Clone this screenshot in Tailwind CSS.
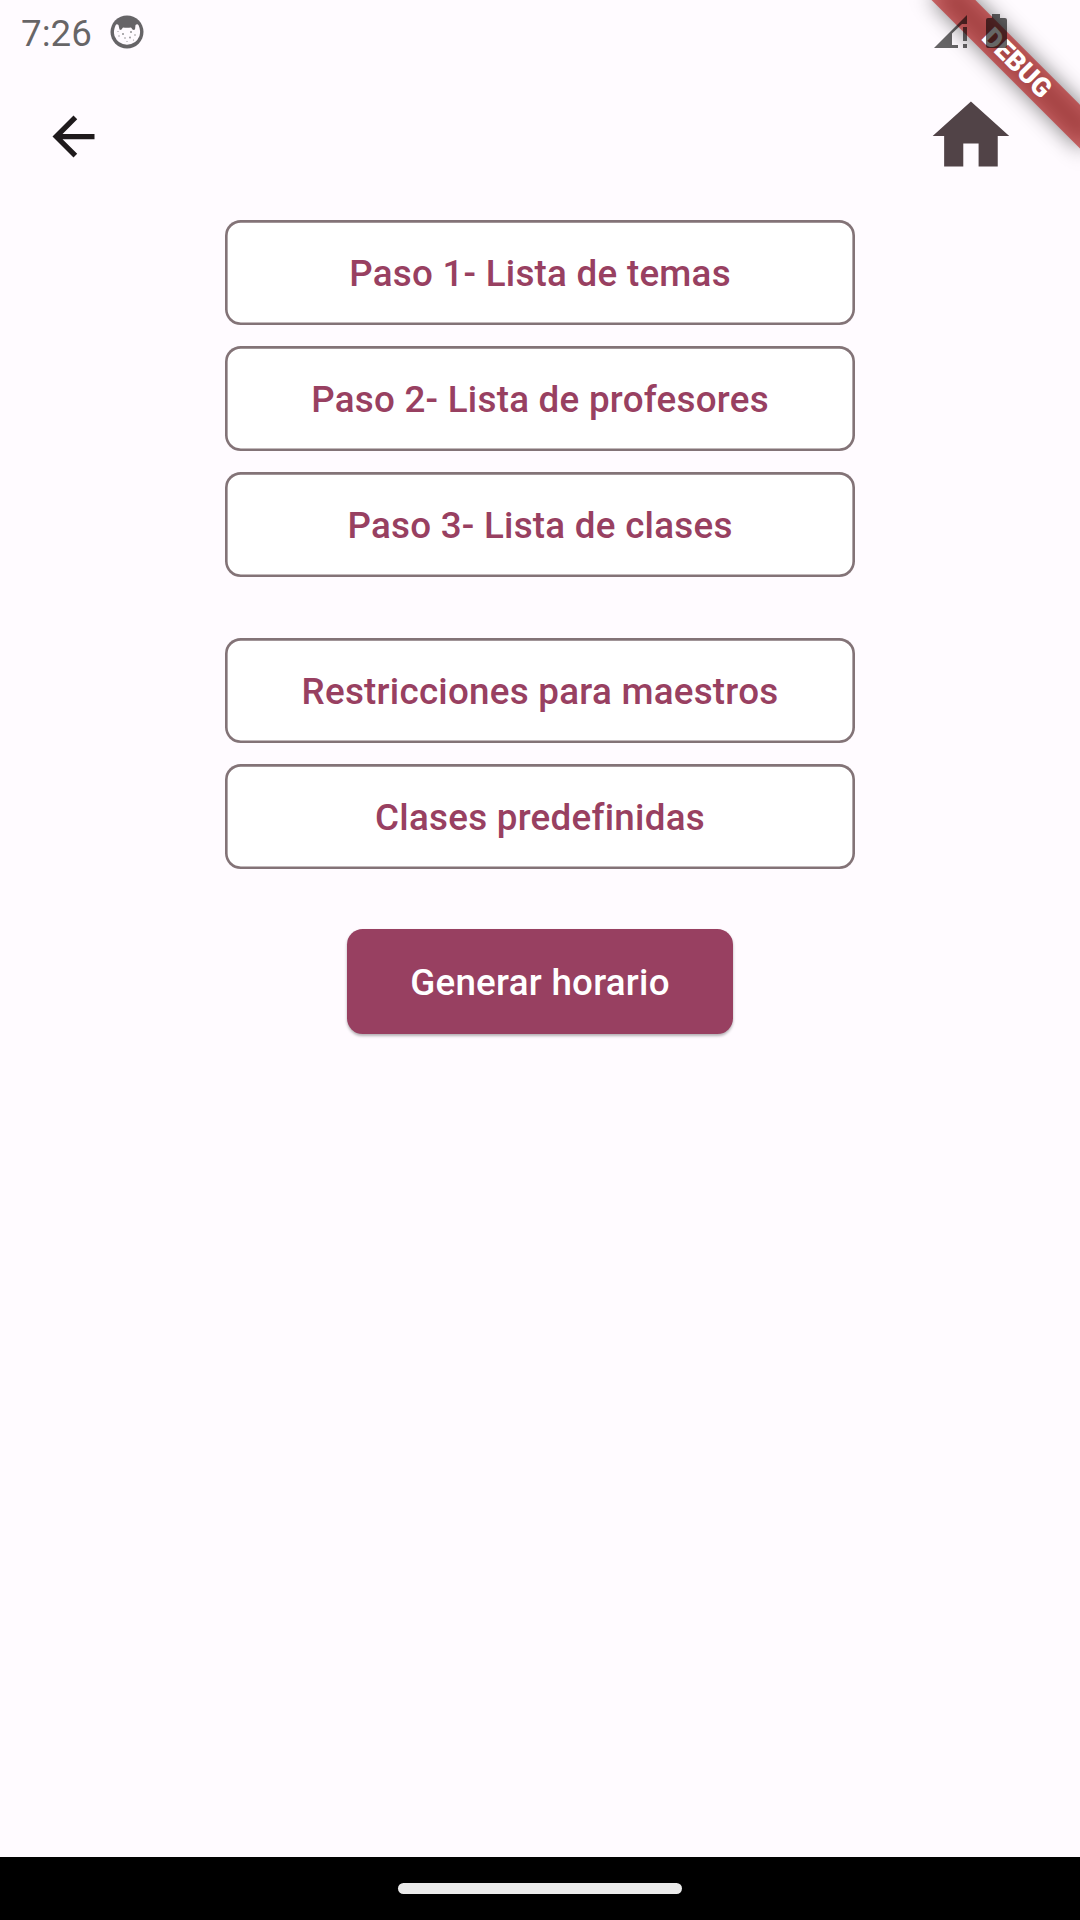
<!DOCTYPE html>
<html lang="es">
<head>
<meta charset="utf-8">
<title>Horario</title>
<script src="https://cdn.jsdelivr.net/npm/@tailwindcss/browser@4"></script>
</head>
<body class="relative flex h-[1920px] w-[1080px] flex-col overflow-hidden bg-[#fffbff] font-[Roboto,sans-serif] text-[36.75px]">
  <!-- debug ribbon -->
  <div class="absolute top-0 right-0 h-[210px] w-[210px] overflow-hidden">
    <div class="absolute top-0 left-full h-0 w-0 rotate-45">
      <div class="absolute top-[73.5px] left-[-105px] h-[31.5px] w-[210px] bg-black/50 blur-[10.4px]"></div>
      <div class="absolute top-[73.5px] left-[-105px] flex h-[31.5px] w-[210px] items-center justify-center bg-[#b71c1c]/63 text-[26.775px] leading-none font-black text-white">DEBUG</div>
    </div>
  </div>

  <!-- status bar -->
  <div class="relative flex h-[63px] items-center justify-between pr-[73px] pl-[21px] text-black/60">
    <div class="flex items-center gap-[18px]">
      <span class="pt-[3px] leading-[43px]">7:26</span>
      <svg class="h-[34px] w-[34px]" viewBox="0 0 34 34" fill="#666467">
        <circle cx="17" cy="17" r="16.500"/>
        <path d="M5.500 10.500Q6.500 8.500 8.500 10L9.500 14.500 11 15 13 12.500Q17 13.200 21 12.500L23 15 25 14.500 25.500 10Q27.500 8.500 28.700 10.500Q31 16 29.500 21Q26 29.500 17 29.700Q8 29.500 4.500 21Q3 16 5.500 10.500Z" fill="#fffbff"/>
        <g opacity=".7">
          <circle cx="13" cy="19" r="1"/><circle cx="21" cy="17" r="1"/><circle cx="15" cy="23" r=".8"/><circle cx="20" cy="22.500" r=".9"/><circle cx="9" cy="21" r=".7"/><circle cx="25" cy="20" r=".8"/><circle cx="17" cy="26.500" r=".6"/><circle cx="8" cy="16.500" r=".6"/><circle cx="23.500" cy="25" r=".6"/>
        </g>
      </svg>
    </div>
    <div class="flex items-center gap-[19px] pb-px">
      <svg class="h-[33px] w-[33px]" viewBox="0 0 33 33" fill="currentColor"><path d="M0 33L33 0V9H28L18 18.500V30H24V33ZM29 12H33V26H29ZM29 29H33V33H29Z"/></svg>
      <svg class="h-[34px] w-[21px]" viewBox="0 0 21 34" fill="currentColor"><path d="M6 0H14V4H19Q21 4 21 6V32Q21 34 19 34H2Q0 34 0 32V6Q0 4 2 4H6Z"/></svg>
    </div>
  </div>

  <!-- navigation -->
  <div class="flex h-[147px] items-center justify-between pr-[63px] pl-[42px]">
    <svg class="h-[63px] w-[63px]" viewBox="0 0 24 24" fill="#1f1a1c"><path d="M20 11H7.830l5.590-5.590L12 4l-8 8 8 8 1.410-1.410L7.830 13H20v-2z"/></svg>
    <svg class="mb-[1.5px] h-[91.875px] w-[91.875px]" viewBox="0 0 24 24" fill="#514347"><path d="M10 20v-6h4v6h5v-8h3L12 3 2 12h3v8z"/></svg>
  </div>

  <main class="flex flex-1 flex-col items-center pt-[10px] font-medium tracking-[0.2625px] text-[#984061]">
    <div class="flex flex-col gap-[21px]">
      <button class="h-[105px] w-[630px] rounded-[15.75px] bg-white pt-[3px] inset-ring-[2.625px] inset-ring-[#837377]">Paso 1- Lista de temas</button>
      <button class="h-[105px] w-[630px] rounded-[15.75px] bg-white pt-[3px] inset-ring-[2.625px] inset-ring-[#837377]">Paso 2- Lista de profesores</button>
      <button class="h-[105px] w-[630px] rounded-[15.75px] bg-white pt-[3px] inset-ring-[2.625px] inset-ring-[#837377]">Paso 3- Lista de clases</button>
    </div>
    <div class="mt-[61px] flex flex-col gap-[21px]">
      <button class="h-[105px] w-[630px] rounded-[15.75px] bg-white pt-[3px] inset-ring-[2.625px] inset-ring-[#837377]">Restricciones para maestros</button>
      <button class="h-[105px] w-[630px] rounded-[15.75px] bg-white pt-[3px] inset-ring-[2.625px] inset-ring-[#837377]">Clases predefinidas</button>
    </div>
    <button class="mt-[60px] h-[105px] w-[386px] rounded-[15.75px] bg-[#984061] pt-[3px] text-white shadow-[0_2px_3px_rgba(0,0,0,0.3)]">Generar horario</button>
  </main>

  <footer class="flex h-[63px] items-center justify-center bg-black">
    <div class="h-[11px] w-[284px] rounded-full bg-[#ebebeb]"></div>
  </footer>
</body>
</html>
